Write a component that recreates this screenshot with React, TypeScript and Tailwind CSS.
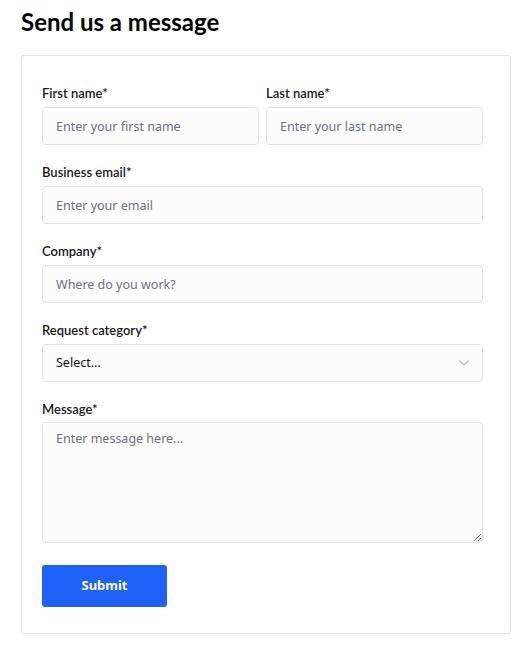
import React from "react";

const labelCls =
  "block text-[13px] leading-5 font-semibold text-[#1a1a1a] font-['Lato',sans-serif]";
const inputCls =
  "w-full h-[38px] px-[13px] rounded-[4px] border border-[#e2e2e2] bg-[#fcfcfc] text-[12.5px] text-[#111] placeholder:text-[#6b7280] outline-none font-['Noto_Sans',sans-serif]";

const Field = ({
  label,
  tight,
  children,
}: {
  label: string;
  tight?: boolean;
  children: React.ReactNode;
}) => (
  <div className="flex-1">
    <label className={labelCls + (tight ? " mb-[3px]" : " mb-1")}>{label}</label>
    {children}
  </div>
);

export default function App() {
  return (
    <div className="bg-white min-h-[651px] w-[528px] px-[21px] pt-[6px]">
      <h1 className="text-[24px] leading-[32px] font-bold text-black font-['Lato',sans-serif]">
        Send us a message
      </h1>
      <form
        className="mt-[17px] w-[490px] border border-[#e3e3e3] rounded-[3px] bg-white pl-[20px] pr-[27px] pt-[27px] pb-[26px] flex flex-col gap-[17px]"
        onSubmit={(e) => e.preventDefault()}
      >
        <div className="flex gap-[7px]">
          <Field label="First name*">
            <input className={inputCls} placeholder="Enter your first name" />
          </Field>
          <Field label="Last name*">
            <input className={inputCls} placeholder="Enter your last name" />
          </Field>
        </div>
        <Field label="Business email*">
          <input className={inputCls} placeholder="Enter your email" />
        </Field>
        <Field label="Company*">
          <input className={inputCls} placeholder="Where do you work?" />
        </Field>
        <Field label="Request category*">
          <div className="relative">
            <div className={inputCls + " flex items-center"}>Select...</div>
            <svg
              className="absolute right-[13px] top-[15px]"
              width="12"
              height="8"
              viewBox="0 0 12 8"
              fill="none"
            >
              <path d="M1 1.5l5 4.5 5-4.5" stroke="#c4c6cc" strokeWidth="1.5" />
            </svg>
          </div>
        </Field>
        <Field label="Message*" tight>
          <textarea
            className={inputCls + " h-[121px] py-[7px] resize-y block"}
            placeholder="Enter message here..."
          />
        </Field>
        <div className="pt-[5px]">
          <button
            type="submit"
            className="w-[125px] h-[42px] rounded-[3px] bg-[#1f62f7] text-white text-[13px] font-bold font-['Noto_Sans',sans-serif]"
          >
            Submit
          </button>
        </div>
      </form>
    </div>
  );
}
